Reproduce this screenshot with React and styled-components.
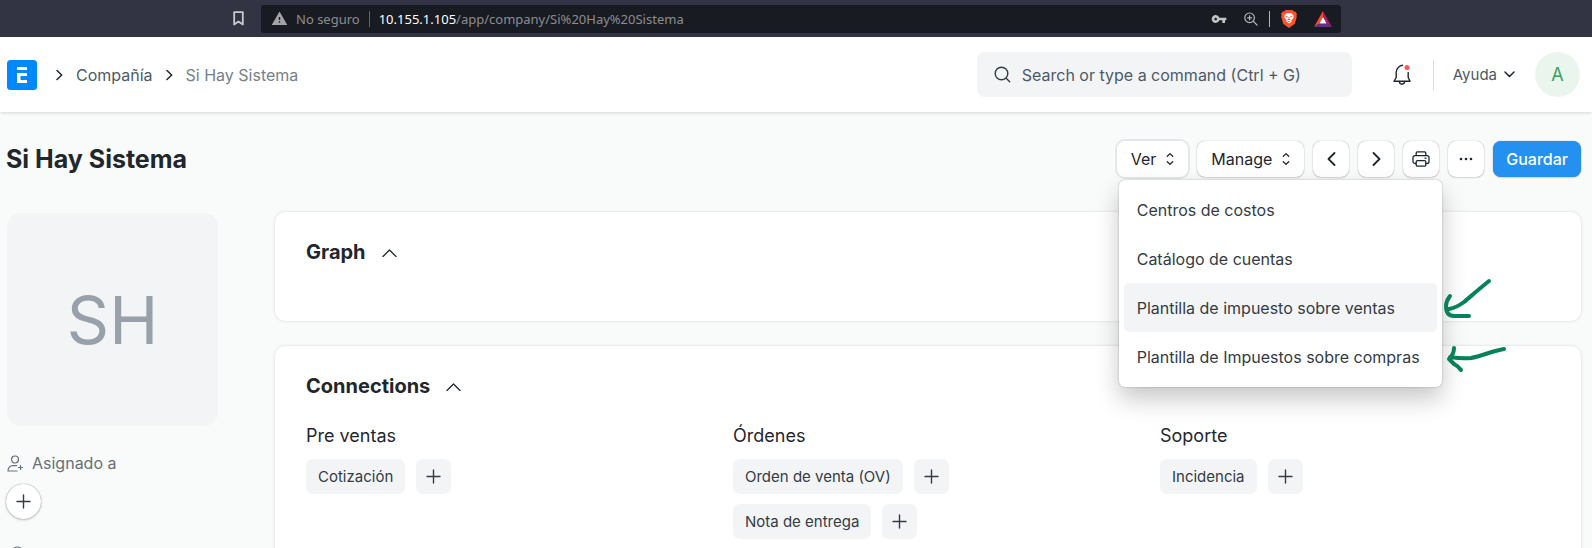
import React from "react";
import styled, { createGlobalStyle } from "styled-components";
import { MdVpnKey, MdWarning } from "react-icons/md";

const ink = "#1f272e";
const text = "#4c5a67";
const soft = "#f3f4f6";

const GlobalStyle = createGlobalStyle`
  *, *::before, *::after { box-sizing: border-box; }
  body {
    margin: 0;
    background: #f9fafa;
    color: ${ink};
    font: 400 16px/24px Inter, "Liberation Sans", sans-serif;
  }
  button, input { font: inherit; color: inherit; }
  button { cursor: pointer; }
  svg { display: block; flex: none; }
`;

const Shell = styled.div`
  min-height: 100vh;
  max-height: 100vh;
  overflow: hidden;
`;

/* Browser bar */
const BrowserBar = styled.div`
  display: flex;
  align-items: center;
  gap: 17px;
  height: 37px;
  padding: 0 251px 0 233px;
  background: #323443;
`;
const AddressBar = styled.div`
  flex: 1;
  display: flex;
  align-items: center;
  height: 28px;
  padding: 0 9px 0 10px;
  border-radius: 3px;
  background: #191b22;
  color: #8b8d91;
  font: 400 13px/20px "Noto Sans", "Open Sans", sans-serif;
  white-space: nowrap;
`;
const Security = styled.span`
  margin-left: 8px;
`;
const BarDivider = styled.span`
  width: 1px;
  height: 16px;
  margin: 0 ${(p) => p.$gap}px;
  background: ${(p) => p.$color};
`;
const Url = styled.span`
  flex: 1;
  strong { font-weight: 400; color: #fff; }
`;
const AddressActions = styled.div`
  display: flex;
  align-items: center;
  gap: 17px;
`;

/* Application navbar */
const Navbar = styled.header`
  position: relative;
  display: flex;
  align-items: center;
  height: 75px;
  padding: 0 12px 0 7px;
  background: #fff;
  box-shadow: 0 1px 3px rgba(25, 39, 52, 0.16);
`;
const Breadcrumbs = styled.nav`
  display: flex;
  align-items: center;
  gap: 13px;
  margin-left: 19px;
`;
const Crumb = styled.a`
  color: ${(p) => (p.$current ? "#74808b" : text)};
  text-decoration: none;
`;
const SearchBox = styled.label`
  display: flex;
  align-items: center;
  gap: 11px;
  width: 375px;
  height: 45px;
  margin-left: auto;
  padding: 0 17px;
  border-radius: 8px;
  background: ${soft};
`;
const SearchInput = styled.input`
  flex: 1;
  min-width: 0;
  padding: 0;
  border: 0;
  outline: 0;
  background: none;
  &::placeholder { color: ${text}; opacity: 1; }
`;
const PlainButton = styled.button`
  display: flex;
  align-items: center;
  gap: 7px;
  padding: 0;
  border: 0;
  background: none;
  color: ${text};
  font-size: ${(p) => (p.$small ? 15 : 16)}px;
`;
const NavTools = styled.div`
  display: flex;
  align-items: center;
  margin-left: 41px;
`;
const NavDivider = styled.span`
  width: 1px;
  height: 30px;
  margin: 0 19px 0 22px;
  background: #d8dcdf;
`;
const Avatar = styled.button`
  width: 45px;
  height: 45px;
  margin-left: 20px;
  padding: 0;
  border: 0;
  border-radius: 50%;
  background: #eaf5ee;
  color: #38a160;
  font-size: 18px;
`;

/* Page head */
const PageHead = styled.div`
  display: flex;
  align-items: center;
  justify-content: space-between;
  padding: 29px 11px 35px 6px;
`;
const Title = styled.h1`
  margin: 0;
  font-size: 25px;
  line-height: 36px;
  font-weight: 700;
`;
const Actions = styled.div`
  display: flex;
  align-items: center;
  gap: 9px;
`;
const ToolButton = styled.button`
  display: flex;
  align-items: center;
  justify-content: center;
  gap: 10px;
  height: 36px;
  min-width: 36px;
  padding: 0 ${(p) => (p.$icon ? 0 : p.$primary ? 13 : 14)}px;
  border: 0;
  border-radius: 8px;
  background: ${(p) => (p.$primary ? "#2490ef" : "#fff")};
  color: ${(p) => (p.$primary ? "#fff" : ink)};
  font-weight: ${(p) => (p.$primary ? 500 : 400)};
  box-shadow: ${(p) =>
    p.$open
      ? "0 0 0 2px #e4e7e9"
      : "0 0 1px rgba(0, 0, 0, 0.45), 0 1px 2px rgba(0, 0, 0, 0.12)"};
`;
const MenuAnchor = styled.div`
  position: relative;
`;
const Menu = styled.ul`
  position: absolute;
  z-index: 2;
  top: 39px;
  left: 2px;
  width: max-content;
  min-width: 323px;
  margin: 0;
  padding: 5px 5px 6px;
  list-style: none;
  border-radius: 6px;
  background: #fff;
  box-shadow: 0 0 2px rgba(0, 0, 0, 0.3), 0 12px 24px rgba(0, 0, 0, 0.22);
`;
const MenuItem = styled.button`
  display: block;
  width: 100%;
  height: 49px;
  padding: 0 13px;
  border: 0;
  border-radius: 5px;
  background: ${(p) => (p.$active ? soft : "transparent")};
  color: #333c44;
  text-align: left;
  white-space: nowrap;
`;
const Marks = styled.svg`
  position: absolute;
  top: 90px;
  left: 100%;
  pointer-events: none;
`;

/* Body */
const Body = styled.div`
  display: grid;
  grid-template-columns: 211px minmax(0, 1fr);
  column-gap: 57px;
  padding: 0 11px 0 7px;
`;
const CompanyImage = styled.div`
  display: grid;
  place-items: center;
  height: 213px;
  margin-top: 1px;
  border-radius: 14px;
  background: ${soft};
  color: #98a1a9;
  font-size: 66px;
  line-height: 80px;
`;
const SideLabel = styled.div`
  display: flex;
  align-items: center;
  gap: 8px;
  margin-top: 25px;
  color: #687178;
`;
const RoundButton = styled.button`
  display: grid;
  place-items: center;
  width: 35px;
  height: 35px;
  margin: 9px 0 0 -1px;
  padding: 0;
  border: 0;
  border-radius: 50%;
  background: #fff;
  box-shadow: 0 0 1px rgba(0, 0, 0, 0.5), 0 1px 3px rgba(0, 0, 0, 0.2);
`;
const Card = styled.section`
  margin-bottom: 25px;
  padding: 28px 19px ${(p) => (p.$tall ? 90 : 57)}px 31px;
  border-radius: 10px;
  background: #fff;
  box-shadow: 0 0 3px rgba(25, 39, 52, 0.16);
`;
const CardTitle = styled.h2`
  margin: 0;
  font-size: 20px;
  line-height: 24px;
  font-weight: 700;
`;
const CardToggle = styled.button`
  display: flex;
  align-items: center;
  gap: 16px;
  padding: 0;
  border: 0;
  background: none;
`;
const Groups = styled.div`
  display: grid;
  grid-template-columns: repeat(3, minmax(0, 1fr));
  column-gap: 25px;
  margin-top: 26px;
`;
const GroupTitle = styled.h3`
  margin: 0 0 11px;
  font-size: 18px;
  line-height: 24px;
  font-weight: 400;
`;
const LinkRow = styled.div`
  display: flex;
  gap: 11px;
  margin-bottom: 10px;
`;
const Chip = styled.a`
  display: flex;
  align-items: center;
  height: 35px;
  padding: 0 12px;
  border-radius: 7px;
  background: ${soft};
  color: #333c44;
  font-size: 15px;
  text-decoration: none;
`;
const AddButton = styled.button`
  display: grid;
  place-items: center;
  width: 35px;
  height: 35px;
  padding: 0;
  border: 0;
  border-radius: 7px;
  background: ${soft};
`;

const Stroke = ({ w, h, d, color = ink, width = 1.5 }) => (
  <svg width={w} height={h} viewBox={`0 0 ${w} ${h}`} fill="none" stroke={color}
    strokeWidth={width} strokeLinecap="round" strokeLinejoin="round" aria-hidden="true">
    <path d={d} />
  </svg>
);
const ChevronRight = () => <Stroke w={7} h={12} d="M1 1.5 5.7 6 1 10.5" />;
const Plus = () => <Stroke w={15} h={15} d="M7.5 1v13M1 7.5h13" color="#333c44" width={1.4} />;
const Select = () => <Stroke w={8} h={14} d="M1.3 4.3 4 1.6l2.7 2.7M1.3 9.7 4 12.4l2.7-2.7" width={1.3} />;
const Collapse = () => <Stroke w={15} h={9} d="M1 8.500 7.500 2 14 8.500" width={1.3} />;

const BookmarkIcon = () => (
  <Stroke w={11} h={15} d="M1.2 1.2h8.6v12.2L5.5 10.6 1.2 13.4z" color="#c9cacd" width={1.8} />
);
const ZoomIcon = () => (
  <Stroke w={14} h={14} d="M5.6 1a4.8 4.8 0 1 0 0 9.6 4.8 4.8 0 0 0 0-9.6M9.2 9.2 13 13M5.6 3.8v4M3.6 5.8h4" color="#b4b5b8" width={1.2} />
);
const BraveIcon = () => (
  <svg width="16" height="18" viewBox="0 0 16 18" aria-hidden="true">
    <path fill="#fb542b" d="M4.6 0h6.8l1.4 1.6 1.5-.2L16 4l-.6 1.6.4 1.2-2 7L8 18l-5.8-4.2-2-7 .4-1.2L0 4l1.700-2.600 1.500.200z" />
    <path fill="#fff" d="M8 3.300 10.200 3l2.500 2.700-.5 2.600-1.900 1.900.4 1.300L8 13.600l-2.700-2.100.4-1.300-1.900-1.900-.5-2.600L5.800 3z" />
    <path fill="none" stroke="#fb542b" strokeWidth=".9" d="M4.600 6.300l2.200.7M11.400 6.300l-2.200.7M8 7v2.300M6.300 10 8 9.300l1.700.7M6.800 12 8 11l1.200 1" />
  </svg>
);
const BatIcon = () => (
  <svg width="18" height="16" viewBox="0 0 18 16" aria-hidden="true">
    <path fill="#ff4724" d="M9 0 0 16l5.500-3.500L9 6z" />
    <path fill="#9e1f63" d="M9 0v6l3.500 6.500L18 16z" />
    <path fill="#662d91" d="M0 16h18l-5.500-3.500h-7z" />
    <path fill="#fff" d="M9 6l-3.600 6.500h7.200z" />
  </svg>
);
const Logo = () => (
  <svg width="30" height="30" viewBox="0 0 30 30" role="img" aria-label="ERPNext">
    <rect width="30" height="30" rx="3.500" fill="#0089ff" />
    <path fill="#fff" d="M10 7h10v3H10zM10 13h10v3h-6.500v4H20v3H10z" />
  </svg>
);
const SearchIcon = () => (
  <Stroke w={17} h={17} d="M7.500 1.200a6.300 6.300 0 1 0 0 12.600 6.300 6.300 0 0 0 0-12.600M12.200 12.200 15.700 15.700" color="#333c44" width={1.400} />
);
const BellIcon = () => (
  <svg width="18" height="22" viewBox="0 0 18 22" fill="none" stroke={ink} strokeWidth="1.400" strokeLinecap="round" strokeLinejoin="round" aria-hidden="true">
    <path d="M9.500 1.300C6.500 1.700 3.300 4.300 3.200 8v5.500L1 17.300h16l-1.800-3.800V8.500" />
    <path d="M6.300 17.500c.4 3.600 5 3.600 5.400 0" />
    <circle cx="14" cy="3.500" r="2.500" fill="#ff5858" stroke="none" />
  </svg>
);
const PrinterIcon = () => (
  <svg width="18" height="16" viewBox="0 0 18 16" fill="none" stroke={ink} strokeWidth="1.300" strokeLinejoin="round" aria-hidden="true">
    <path d="M4.200 4.500V2A1.200 1.200 0 0 1 5.400.8h7.200A1.200 1.200 0 0 1 13.800 2v2.500" />
    <path d="M4.200 12.500H3A2 2 0 0 1 1 10.500V6.600a2 2 0 0 1 2-2h12a2 2 0 0 1 2 2v3.900a2 2 0 0 1-2 2h-1.200" />
    <rect x="4.200" y="9.700" width="9.600" height="5.500" rx="1.200" />
    <path d="M12.500 7.200h2" />
  </svg>
);
const DotsIcon = () => (
  <svg width="14" height="4" viewBox="0 0 14 4" fill={ink} aria-hidden="true">
    <circle cx="2" cy="2" r="1.300" /><circle cx="7" cy="2" r="1.300" /><circle cx="12" cy="2" r="1.300" />
  </svg>
);
const AssignIcon = () => (
  <Stroke w={17} h={17} d="M8 1a3.500 3.500 0 1 1 0 7 3.500 3.500 0 0 1 0-7M9.500 10.700H5.500C3 10.700 1 13 1 16h9M13.500 10.500v4M11.500 12.500h4" color="#687178" width={1.200} />
);
const ClipIcon = () => (
  <Stroke w={17} h={17} d="M6 14V6.500a4.500 3.500 0 0 1 9 0V12a2.500 2.500 0 0 1-5 0V8" color="#687178" width={1.200} />
);

const menuItems = [
  "Centros de costos",
  "Catálogo de cuentas",
  "Plantilla de impuesto sobre ventas",
  "Plantilla de Impuestos sobre compras",
];
const groups = [
  { title: "Pre ventas", links: ["Cotización"] },
  { title: "Órdenes", links: ["Orden de venta (OV)", "Nota de entrega"] },
  { title: "Soporte", links: ["Incidencia"] },
];

export default function App() {
  return (
    <Shell>
      <GlobalStyle />
      <BrowserBar>
        <BookmarkIcon />
        <AddressBar>
          <MdWarning size={17} color="#a3a4a8" />
          <Security>No seguro</Security>
          <BarDivider $gap={9} $color="#62646a" />
          <Url><strong>10.155.1.105</strong>/app/company/Si%20Hay%20Sistema</Url>
          <AddressActions>
            <MdVpnKey size={16} color="#c3c4c6" />
            <ZoomIcon />
          </AddressActions>
          <BarDivider $gap={11} $color="#b4b5b8" />
          <AddressActions>
            <BraveIcon />
            <BatIcon />
          </AddressActions>
        </AddressBar>
      </BrowserBar>

      <Navbar>
        <Logo />
        <Breadcrumbs aria-label="Ruta">
          <ChevronRight />
          <Crumb href="#compania">Compañía</Crumb>
          <ChevronRight />
          <Crumb href="#si-hay-sistema" $current>Si Hay Sistema</Crumb>
        </Breadcrumbs>
        <SearchBox>
          <SearchIcon />
          <SearchInput type="text" placeholder="Search or type a command (Ctrl + G)" aria-label="Search" />
        </SearchBox>
        <NavTools>
          <PlainButton aria-label="Notificaciones"><BellIcon /></PlainButton>
          <NavDivider />
          <PlainButton $small>Ayuda<Stroke w={11} h={7} d="M1 1l4.500 4.500L10 1" /></PlainButton>
          <Avatar>A</Avatar>
        </NavTools>
      </Navbar>

      <PageHead>
        <Title>Si Hay Sistema</Title>
        <Actions>
          <MenuAnchor>
            <ToolButton $open aria-haspopup="true" aria-expanded="true">Ver<Select /></ToolButton>
            <Menu>
              {menuItems.map((item, i) => (
                <li key={item}><MenuItem $active={i === 2}>{item}</MenuItem></li>
              ))}
              <Marks width="70" height="110" viewBox="0 0 70 110" fill="none" stroke="#058257"
                strokeWidth="4" strokeLinecap="round" strokeLinejoin="round" aria-hidden="true">
                <path d="M47 11C37 19 28 27 22 32Q14 38 7 39M8 26Q4 31 4 36Q4 46 12 46H27" />
                <path d="M62 79C50 81 40 86 29 88Q20 89 8 87M12 78Q12 84 7 89L12 94Q16 96 19 100" />
              </Marks>
            </Menu>
          </MenuAnchor>
          <ToolButton>Manage<Select /></ToolButton>
          <ToolButton $icon aria-label="Anterior"><Stroke w={9} h={14} d="M7.500 1 1.500 7l6 6" width={1.800} /></ToolButton>
          <ToolButton $icon aria-label="Siguiente"><Stroke w={9} h={14} d="M1.500 1l6 6-6 6" width={1.800} /></ToolButton>
          <ToolButton $icon aria-label="Imprimir"><PrinterIcon /></ToolButton>
          <ToolButton $icon aria-label="Más"><DotsIcon /></ToolButton>
          <ToolButton $primary>Guardar</ToolButton>
        </Actions>
      </PageHead>

      <Body>
        <aside>
          <CompanyImage>SH</CompanyImage>
          <SideLabel><AssignIcon />Asignado a</SideLabel>
          <RoundButton aria-label="Asignar"><Plus /></RoundButton>
          <SideLabel><ClipIcon /></SideLabel>
        </aside>
        <main>
          <Card>
            <CardTitle><CardToggle>Graph<Collapse /></CardToggle></CardTitle>
          </Card>
          <Card $tall>
            <CardTitle><CardToggle>Connections<Collapse /></CardToggle></CardTitle>
            <Groups>
              {groups.map((g) => (
                <div key={g.title}>
                  <GroupTitle>{g.title}</GroupTitle>
                  {g.links.map((l) => (
                    <LinkRow key={l}>
                      <Chip href="#lista">{l}</Chip>
                      <AddButton aria-label={`Agregar ${l}`}><Plus /></AddButton>
                    </LinkRow>
                  ))}
                </div>
              ))}
            </Groups>
          </Card>
        </main>
      </Body>
    </Shell>
  );
}
